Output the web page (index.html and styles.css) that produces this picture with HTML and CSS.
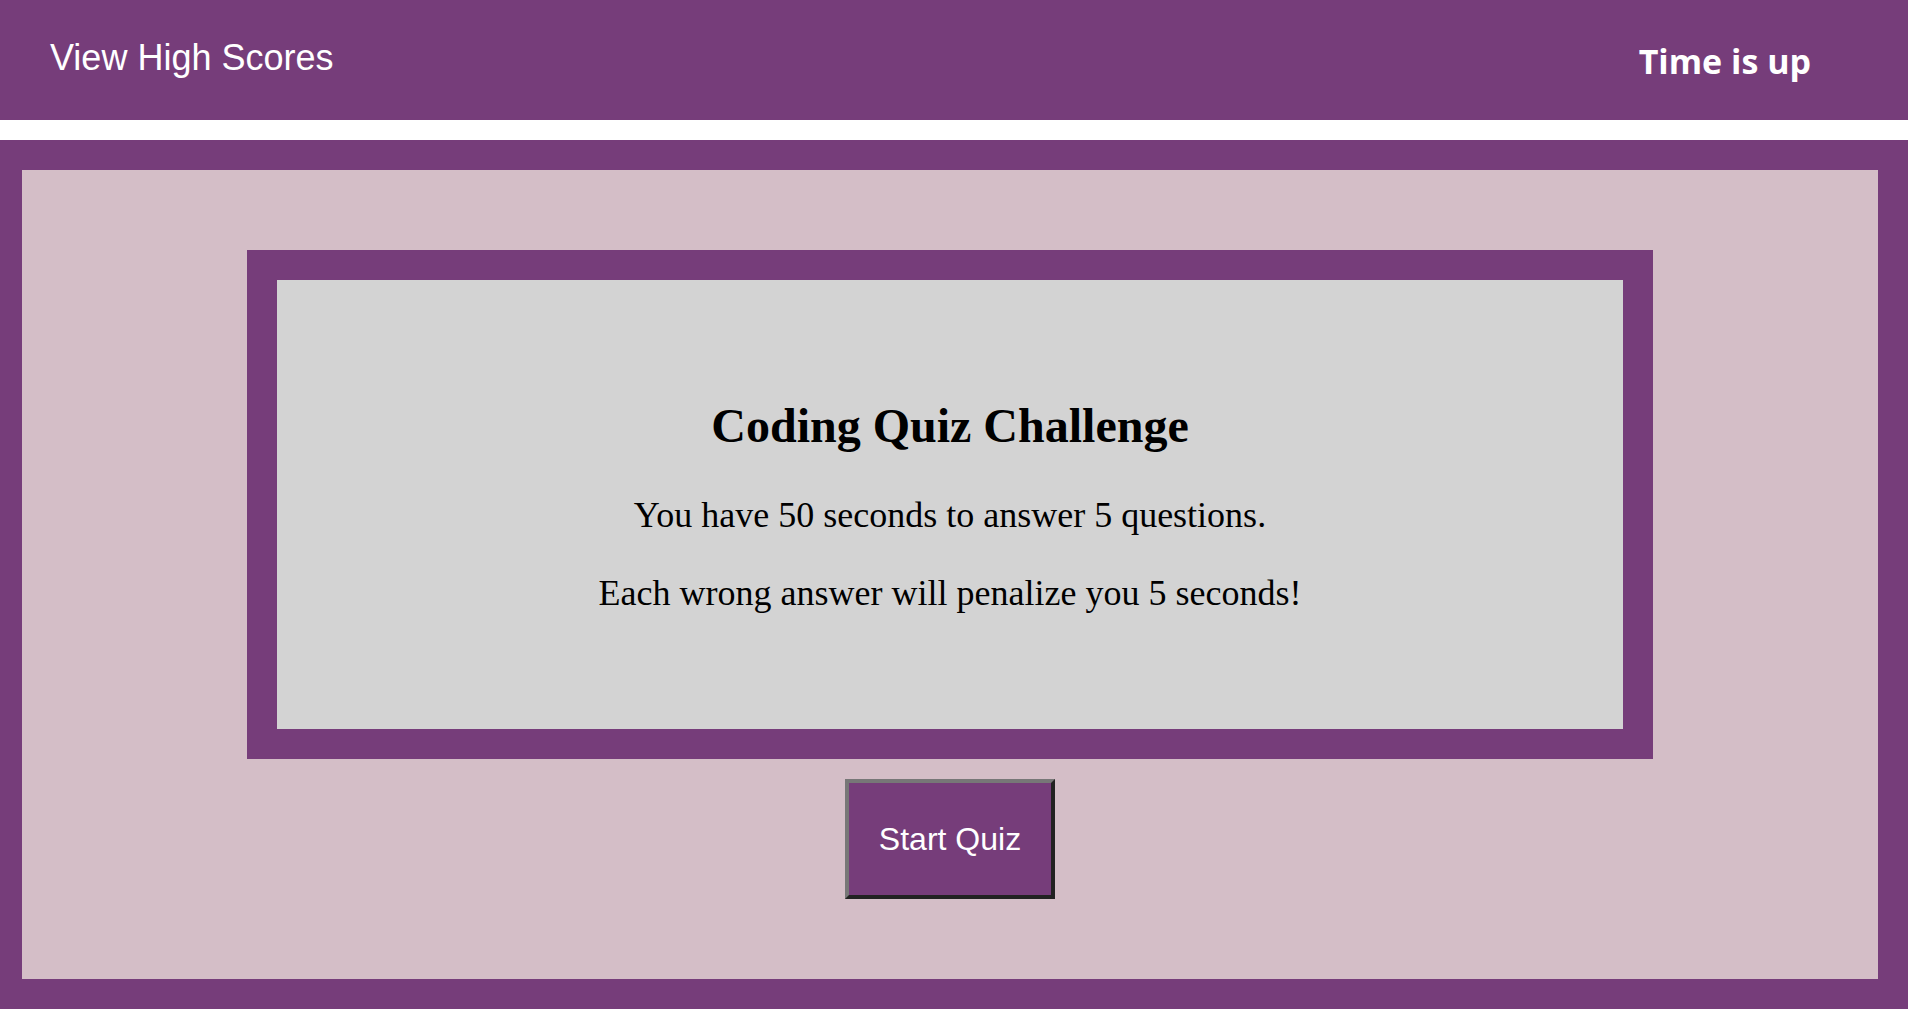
FILE: index.html
```html
<!DOCTYPE html>
<html lang="en">
<head>
<meta charset="utf-8">
<title>Coding Quiz Challenge</title>
<link rel="stylesheet" href="styles.css">
</head>
<body>
<div class="page">
  <header class="topbar">
    <a class="scores" href="#">View High Scores</a>
    <div class="timer">Time is up</div>
  </header>
  <main class="frame">
    <section class="card">
      <h1 class="title">Coding Quiz Challenge</h1>
      <p class="text">You have 50 seconds to answer 5 questions.</p>
      <p class="text">Each wrong answer will penalize you 5 seconds!</p>
    </section>
    <button class="start" type="button">Start Quiz</button>
  </main>
</div>
</body>
</html>
```
FILE: styles.css
```css
html, body {
  margin: 0;
  padding: 0;
  background: #ffffff;
}

.page {
  width: 1908px;
}

.topbar {
  display: flex;
  justify-content: space-between;
  align-items: flex-start;
  height: 120px;
  padding: 0 97px 0 50px;
  box-sizing: border-box;
  background: #763d7a;
}

.scores {
  margin-top: 37px;
  font-family: "Liberation Sans", Arial, sans-serif;
  font-size: 36px;
  color: #ffffff;
  text-decoration: none;
}

.timer {
  margin-top: 38px;
  font-family: "Open Sans", "Noto Sans", sans-serif;
  font-weight: 700;
  font-size: 34px;
  color: #ffffff;
}

.frame {
  display: flex;
  flex-direction: column;
  align-items: center;
  margin-top: 20px;
  border-style: solid;
  border-color: #763d7a;
  border-width: 30px 30px 30px 22px;
  background: #d4bec7;
  padding: 80px 0;
}

.card {
  width: 1306px;
  border: 30px solid #763d7a;
  background: #d3d3d3;
  padding: 118px 20px 115px;
  box-sizing: content-box;
  text-align: center;
  font-family: "Liberation Serif", "Times New Roman", serif;
  color: #000000;
}

.title {
  margin: 0 0 41px;
  font-size: 48px;
  font-weight: 700;
}

.text {
  margin: 0;
  font-size: 36px;
}

.text + .text {
  margin-top: 36px;
}

.start {
  display: flex;
  align-items: center;
  justify-content: center;
  margin-top: 20px;
  width: 210px;
  height: 120px;
  box-sizing: border-box;
  border-style: solid;
  border-width: 4px;
  border-color: #777777 #222222 #222222 #777777;
  background: #763d7a;
  color: #ffffff;
  font-family: "Liberation Sans", Arial, sans-serif;
  font-size: 32px;
  padding: 0;
}
```
